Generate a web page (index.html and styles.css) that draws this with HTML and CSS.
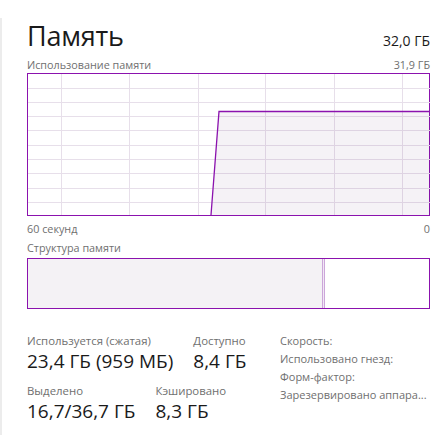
FILE: index.html
```html
<html>
	<head>
		<meta charset="utf8"/>
		<title>Память</title>
		<link rel="stylesheet" href="styles.css">
	</head>
	<body>
		<div class="panel">
			<div class="header">
				<span class="title">Память</span>
				<span class="total">32,0 ГБ</span>
			</div>

			<div class="caption">
				<span>Использование памяти</span>
				<span>31,9 ГБ</span>
			</div>
			<div class="chart">
				<svg width="402" height="141" viewBox="0 0 402 141">
					<g stroke="#e7dfea" stroke-width="1">
						<line x1="33.5" y1="0" x2="33.5" y2="141"/>
						<line x1="101.5" y1="0" x2="101.5" y2="141"/>
						<line x1="170.5" y1="0" x2="170.5" y2="141"/>
						<line x1="237.5" y1="0" x2="237.5" y2="141"/>
						<line x1="306.5" y1="0" x2="306.5" y2="141"/>
						<line x1="374.5" y1="0" x2="374.5" y2="141"/>
						<line x1="0" y1="14.5" x2="402" y2="14.5"/>
						<line x1="0" y1="28.5" x2="402" y2="28.5"/>
						<line x1="0" y1="42.5" x2="402" y2="42.5"/>
						<line x1="0" y1="56.5" x2="402" y2="56.5"/>
						<line x1="0" y1="71.5" x2="402" y2="71.5"/>
						<line x1="0" y1="85.5" x2="402" y2="85.5"/>
						<line x1="0" y1="99.5" x2="402" y2="99.5"/>
						<line x1="0" y1="114.5" x2="402" y2="114.5"/>
						<line x1="0" y1="128.5" x2="402" y2="128.5"/>
					</g>
					<polygon points="183,141 191,37.5 402,37.5 402,141" fill="#5a2a6e" fill-opacity="0.06"/>
					<polyline points="183,141 191,37.5 402,37.5" fill="none" stroke="#8b12ae" stroke-width="1.3"/>
				</svg>
			</div>
			<div class="caption axis">
				<span>60 секунд</span>
				<span>0</span>
			</div>

			<div class="caption single">Структура памяти</div>
			<div class="structure">
				<div class="used"></div>
				<div class="split"></div>
				<div class="free"></div>
			</div>

			<div class="stats">
				<div class="left">
					<div class="row">
						<div class="stat">
							<div class="label">Используется (сжатая)</div>
							<div class="value">23,4 ГБ (959 МБ)</div>
						</div>
						<div class="stat">
							<div class="label">Доступно</div>
							<div class="value">8,4 ГБ</div>
						</div>
					</div>
					<div class="row">
						<div class="stat">
							<div class="label">Выделено</div>
							<div class="value">16,7/36,7 ГБ</div>
						</div>
						<div class="stat">
							<div class="label">Кэшировано</div>
							<div class="value">8,3 ГБ</div>
						</div>
					</div>
				</div>
				<div class="right">
					<div class="prop">Скорость:</div>
					<div class="prop">Использовано гнезд:</div>
					<div class="prop">Форм-фактор:</div>
					<div class="prop">Зарезервировано аппара...</div>
				</div>
			</div>
		</div>
	</body>
</html>
```

FILE: styles.css
```css
* {
	box-sizing : border-box;
}

html, body {
	height : 100%;
}

body {
	margin      : 0;
	background  : #fff;
	font-family : 'Open Sans', 'Noto Sans', sans-serif;
	color       : #1a1a1a;
	overflow    : hidden;
}

.panel {
	margin-top   : 18px;
	height       : 100%;
	border-left  : 2px solid #ececec;
	padding      : 0 18px 0 25px;
}

.header {
	display         : flex;
	justify-content : space-between;
	align-items     : baseline;
	height          : 38px;
	padding-top     : 3px;
}

.title {
	font-size   : 27px;
	font-weight : 400;
	line-height : 30px;
	letter-spacing : -0.2px;
}

.total {
	font-size   : 14px;
}

.caption {
	display         : flex;
	justify-content : space-between;
	font-size       : 10.8px;
	line-height     : 17px;
	color           : #6f6f6f;
}

.axis {
	margin-top : 4px;
	height     : 15px;
}

.single {
	margin-top : 4px;
	height     : 19px;
}

.chart {
	height : 143px;
	border : 1px solid #8b12ae;
}

.chart svg {
	display : block;
}

.structure {
	display : flex;
	height  : 51px;
	border  : 1px solid #8b12ae;
}

.used {
	width      : 294px;
	background : #f4f2f5;
}

.split {
	width        : 3px;
	border-left  : 1px solid #cca6da;
	border-right : 1px solid #cca6da;
	background   : #f1e9f4;
}

.free {
	flex : 1;
}

.stats {
	display    : flex;
	margin-top : 25px;
}

.left {
	width : 253px;
}

.row {
	display : flex;
	gap     : 20px;
	margin-bottom : 9px;
}

.label {
	font-size   : 11.4px;
	line-height : 14px;
	color       : #6f6f6f;
}

.value {
	font-size   : 19px;
	line-height : 27px;
}

.right {
	margin-top  : -2px;
	font-size   : 11px;
	color       : #6f6f6f;
}

.prop {
	line-height : 18px;
	white-space : nowrap;
}
```
